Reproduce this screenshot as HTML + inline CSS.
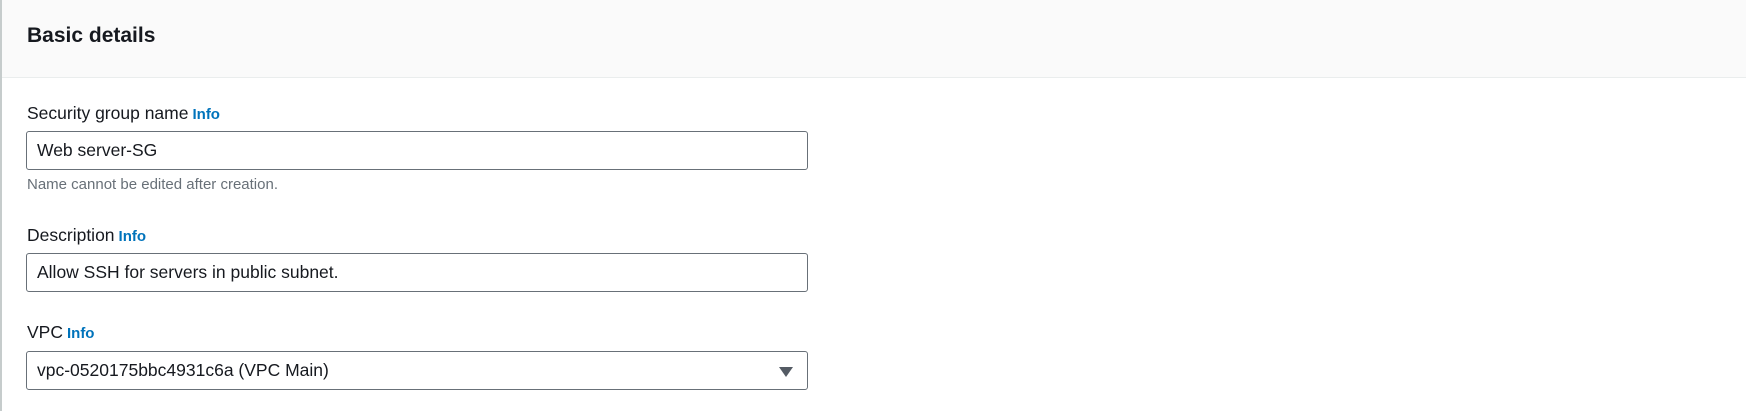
<!DOCTYPE html>
<html><head><style>
body{margin:0;width:1746px;height:411px;background:#fff;font-family:"Liberation Sans",sans-serif;color:#16191f;position:relative;overflow:hidden}
.lb{position:absolute;left:0;top:0;width:2px;height:411px;background:#c6cccc}
.hdr{position:absolute;left:2px;top:0;right:0;height:77px;background:#fafafa;border-bottom:1px solid #eaeded}
.hdr h2{margin:0;position:absolute;left:25px;top:24px;font-size:21px;font-weight:bold;line-height:24px}
.lab{position:absolute;left:27px;font-size:17.5px;line-height:20px}
.lab b{color:#0073bb;font-size:15px;margin-left:4px}
.in{position:absolute;left:26px;width:770px;height:37px;border:1px solid #687078;border-radius:3px;font-size:17.5px;line-height:37px;padding-left:10px}
.hint{position:absolute;left:27px;top:176px;font-size:15px;line-height:18px;color:#687078}
.arr{position:absolute;left:779px;top:367px;width:0;height:0;border-left:7px solid transparent;border-right:7px solid transparent;border-top:10px solid #545b64}
</style></head><body>
<div class="lb"></div>
<div class="hdr"><h2>Basic details</h2></div>
<div class="lab" style="top:103px">Security group name<b>Info</b></div>
<div class="in" style="top:131px">Web server-SG</div>
<div class="hint">Name cannot be edited after creation.</div>
<div class="lab" style="top:225px">Description<b>Info</b></div>
<div class="in" style="top:253px">Allow SSH for servers in public subnet.</div>
<div class="lab" style="top:322px">VPC<b>Info</b></div>
<div class="in" style="top:351px">vpc-0520175bbc4931c6a (VPC Main)</div>
<div class="arr"></div>
</body></html>
